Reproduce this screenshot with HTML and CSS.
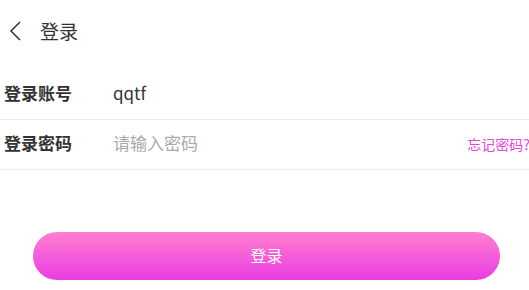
FILE: index.html
```html
<!DOCTYPE html>
<html lang="zh-CN">
<head>
  <meta charset="UTF-8" />
  <meta name="viewport" content="width=device-width, initial-scale=1" />
  <title>登录</title>
  <link rel="stylesheet" href="styles.css">
</head>
<body>
  <header class="topbar">
    <span class="back">
      <svg width="14" height="20" viewBox="0 0 14 20">
        <path d="M11 1 L2 10 L11 19" fill="none" stroke="#333" stroke-width="1.5" />
      </svg>
    </span>
    <span class="title">登录</span>
  </header>

  <main class="form">
    <div class="row">
      <span class="label">登录账号</span>
      <span class="value">qqtf</span>
    </div>
    <div class="row">
      <span class="label">登录密码</span>
      <span class="value placeholder">请输入密码</span>
      <a class="forgot">忘记密码?</a>
    </div>
  </main>

  <div class="actions">
    <button class="login-btn">登录</button>
  </div>
</body>
</html>
```

FILE: styles.css
```css
body {
  margin: 0;
  background: #fff;
  font-family: "Noto Sans CJK SC", "Noto Sans", sans-serif;
  color: #333;
  overflow: hidden;
}

.topbar {
  height: 60px;
  padding-bottom: 2px;
  display: flex;
  align-items: center;
  padding-left: 9px;
}

.title {
  font-size: 19px;
  color: #333;
}

.back {
  display: flex;
  width: 31px;
  margin-top: 1px;
}

.form {
  margin-top: 8px;
}

.row {
  height: 45px;
  padding-bottom: 4px;
  border-bottom: 1px solid #ececec;
  display: flex;
  align-items: center;
  padding-left: 4px;
  white-space: nowrap;
}

.label {
  width: 109px;
  font-size: 17px;
  font-weight: bold;
  color: #333;
}

.value {
  flex: 1;
  font-size: 17px;
  color: #333;
}

.placeholder {
  color: #aaa;
}

.forgot {
  font-size: 14px;
  color: #e04ad8;
  margin-right: -1px;
  padding-top: 2px;
}

.actions {
  padding: 62px 29px 0 33px;
}

.login-btn {
  width: 100%;
  height: 48px;
  border: none;
  border-radius: 24px;
  background: linear-gradient(#ff7fd0, #e93ce2);
  color: #fff;
  font-family: inherit;
  font-size: 16px;
  padding-bottom: 3px;
}
```
